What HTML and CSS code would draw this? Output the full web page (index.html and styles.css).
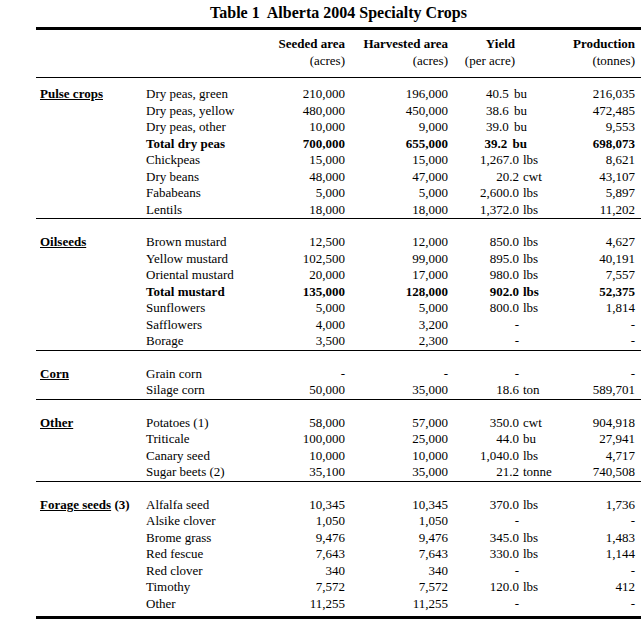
FILE: index.html
```html
<!DOCTYPE html>
<html lang="en">
<head>
<meta charset="utf-8">
<title>Table 1 Alberta 2004 Specialty Crops</title>
<link rel="stylesheet" href="styles.css">
</head>
<body>
<div class="page">
  <h1 class="title">Table 1&nbsp; Alberta 2004 Specialty Crops</h1>
  <table class="crops">
    <colgroup>
      <col class="c-grp"><col class="c-item"><col class="c-seed"><col class="c-harv"><col class="c-yield"><col class="c-unit"><col class="c-prod">
    </colgroup>
    <thead>
      <tr class="h1"><th></th><th></th><th class="num">Seeded area</th><th class="num">Harvested area</th><th class="num yh">Yield</th><th></th><th class="num">Production</th></tr>
      <tr class="h2"><th></th><th></th><th class="num">(acres)</th><th class="num">(acres)</th><th class="num yh">(per acre)</th><th></th><th class="num">(tonnes)</th></tr>
    </thead>
    <tbody class="grp first">
      <tr><td class="label"><u>Pulse crops</u></td><td>Dry peas, green</td><td class="num">210,000</td><td class="num">196,000</td><td class="ypair" colspan="2">40.5 bu</td><td class="num">216,035</td></tr>
      <tr><td></td><td>Dry peas, yellow</td><td class="num">480,000</td><td class="num">450,000</td><td class="ypair" colspan="2">38.6 bu</td><td class="num">472,485</td></tr>
      <tr><td></td><td>Dry peas, other</td><td class="num">10,000</td><td class="num">9,000</td><td class="ypair" colspan="2">39.0 bu</td><td class="num">9,553</td></tr>
      <tr class="total"><td></td><td>Total dry peas</td><td class="num">700,000</td><td class="num">655,000</td><td class="ypair" colspan="2">39.2 bu</td><td class="num">698,073</td></tr>
      <tr><td></td><td>Chickpeas</td><td class="num">15,000</td><td class="num">15,000</td><td class="num">1,267.0</td><td class="unit">lbs</td><td class="num">8,621</td></tr>
      <tr><td></td><td>Dry beans</td><td class="num">48,000</td><td class="num">47,000</td><td class="num">20.2</td><td class="unit">cwt</td><td class="num">43,107</td></tr>
      <tr><td></td><td>Fababeans</td><td class="num">5,000</td><td class="num">5,000</td><td class="num">2,600.0</td><td class="unit">lbs</td><td class="num">5,897</td></tr>
      <tr><td></td><td>Lentils</td><td class="num">18,000</td><td class="num">18,000</td><td class="num">1,372.0</td><td class="unit">lbs</td><td class="num">11,202</td></tr>
    </tbody>
    <tbody class="grp">
      <tr><td class="label"><u>Oilseeds</u></td><td>Brown mustard</td><td class="num">12,500</td><td class="num">12,000</td><td class="num">850.0</td><td class="unit">lbs</td><td class="num">4,627</td></tr>
      <tr><td></td><td>Yellow mustard</td><td class="num">102,500</td><td class="num">99,000</td><td class="num">895.0</td><td class="unit">lbs</td><td class="num">40,191</td></tr>
      <tr><td></td><td>Oriental mustard</td><td class="num">20,000</td><td class="num">17,000</td><td class="num">980.0</td><td class="unit">lbs</td><td class="num">7,557</td></tr>
      <tr class="total"><td></td><td>Total mustard</td><td class="num">135,000</td><td class="num">128,000</td><td class="num">902.0</td><td class="unit">lbs</td><td class="num">52,375</td></tr>
      <tr><td></td><td>Sunflowers</td><td class="num">5,000</td><td class="num">5,000</td><td class="num">800.0</td><td class="unit">lbs</td><td class="num">1,814</td></tr>
      <tr><td></td><td>Safflowers</td><td class="num">4,000</td><td class="num">3,200</td><td class="num">-</td><td class="unit"></td><td class="num">-</td></tr>
      <tr><td></td><td>Borage</td><td class="num">3,500</td><td class="num">2,300</td><td class="num">-</td><td class="unit"></td><td class="num">-</td></tr>
    </tbody>
    <tbody class="grp">
      <tr><td class="label"><u>Corn</u></td><td>Grain corn</td><td class="num">-</td><td class="num">-</td><td class="num">-</td><td class="unit"></td><td class="num">-</td></tr>
      <tr><td></td><td>Silage corn</td><td class="num">50,000</td><td class="num">35,000</td><td class="num">18.6</td><td class="unit">ton</td><td class="num">589,701</td></tr>
    </tbody>
    <tbody class="grp">
      <tr><td class="label"><u>Other</u></td><td>Potatoes (1)</td><td class="num">58,000</td><td class="num">57,000</td><td class="num">350.0</td><td class="unit">cwt</td><td class="num">904,918</td></tr>
      <tr><td></td><td>Triticale</td><td class="num">100,000</td><td class="num">25,000</td><td class="num">44.0</td><td class="unit">bu</td><td class="num">27,941</td></tr>
      <tr><td></td><td>Canary seed</td><td class="num">10,000</td><td class="num">10,000</td><td class="num">1,040.0</td><td class="unit">lbs</td><td class="num">4,717</td></tr>
      <tr><td></td><td>Sugar beets (2)</td><td class="num">35,100</td><td class="num">35,000</td><td class="num">21.2</td><td class="unit">tonne</td><td class="num">740,508</td></tr>
    </tbody>
    <tbody class="grp last">
      <tr><td class="label"><u>Forage seeds</u> (3)</td><td>Alfalfa seed</td><td class="num">10,345</td><td class="num">10,345</td><td class="num">370.0</td><td class="unit">lbs</td><td class="num">1,736</td></tr>
      <tr><td></td><td>Alsike clover</td><td class="num">1,050</td><td class="num">1,050</td><td class="num">-</td><td class="unit"></td><td class="num">-</td></tr>
      <tr><td></td><td>Brome grass</td><td class="num">9,476</td><td class="num">9,476</td><td class="num">345.0</td><td class="unit">lbs</td><td class="num">1,483</td></tr>
      <tr><td></td><td>Red fescue</td><td class="num">7,643</td><td class="num">7,643</td><td class="num">330.0</td><td class="unit">lbs</td><td class="num">1,144</td></tr>
      <tr><td></td><td>Red clover</td><td class="num">340</td><td class="num">340</td><td class="num">-</td><td class="unit"></td><td class="num">-</td></tr>
      <tr><td></td><td>Timothy</td><td class="num">7,572</td><td class="num">7,572</td><td class="num">120.0</td><td class="unit">lbs</td><td class="num">412</td></tr>
      <tr><td></td><td>Other</td><td class="num">11,255</td><td class="num">11,255</td><td class="num">-</td><td class="unit"></td><td class="num">-</td></tr>
    </tbody>
  </table>
</div>
</body>
</html>
```

FILE: styles.css
```css
html, body {
  margin: 0;
  padding: 0;
  background: #fff;
}

body {
  font-family: "Liberation Serif", "Times New Roman", serif;
  color: #000;
}

.page {
  margin-left: 36px;
  width: 605px;
}

.title {
  margin: 0 0 5px;
  padding-top: 3px;
  font-size: 16px;
  line-height: 19px;
  font-weight: bold;
  text-align: center;
}

.crops {
  width: 605px;
  table-layout: fixed;
  border-collapse: collapse;
  font-size: 13px;
  line-height: 16.5px;
  border-top: 3px solid #000;
  border-bottom: 3px solid #000;
}

.c-grp { width: 110px; }
.c-item { width: 114px; }
.c-seed { width: 85px; }
.c-harv { width: 103px; }
.c-yield { width: 71px; }
.c-unit { width: 46px; }
.c-prod { width: 76px; }

.crops th,
.crops td {
  padding: 0;
  white-space: nowrap;
  text-align: left;
  vertical-align: top;
  font-weight: normal;
}

.crops .num { text-align: right; }
.crops td:last-child,
.crops th:last-child { padding-right: 6px; }

.crops .label {
  padding-left: 4px;
  font-weight: bold;
}

.crops .unit { padding-left: 4px; }

.crops .ypair {
  text-align: right;
  padding-right: 38px;
  word-spacing: 2px;
}

.h1 th {
  padding-top: 6px;
  font-weight: bold;
}

.crops .yh { padding-right: 4px; }

.h2 th {
  padding-bottom: 8px;
  border-bottom: 1px solid #000;
}

.total td { font-weight: bold; }

.grp tr:first-child td { padding-top: 15px; }
.grp.first tr:first-child td { padding-top: 8px; }
.grp tr:last-child td { border-bottom: 1px solid #000; }
.grp.last tr:last-child td {
  border-bottom: 0;
  padding-bottom: 4px;
}
```
